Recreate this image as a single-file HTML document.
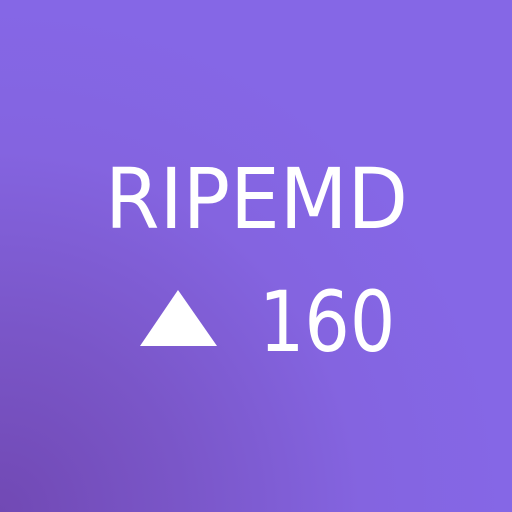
<!DOCTYPE html>
<html><head><style>
html,body{margin:0;padding:0}
body{width:512px;height:512px;overflow:hidden;position:relative;
background:radial-gradient(circle at 0% 100%, #7149b4 0%, #7a56c8 25%, #8464e0 50%, #8567e6 70%, #8567e6 100%);
font-family:"DejaVu Sans","Liberation Sans",sans-serif;color:#fff}
.t{position:absolute;font-size:84px;line-height:1;white-space:nowrap;transform-origin:0 0}
</style></head><body>
<div class="t" style="left:105px;top:157px;transform:scaleX(0.935)">RIPEMD</div>
<svg style="position:absolute;left:0;top:0" width="512" height="512"><polygon points="178,290 217,346 140,346" fill="#fff"/></svg>
<div class="t" style="left:259px;top:280px;transform:scaleX(0.85)">160</div>
</body></html>
